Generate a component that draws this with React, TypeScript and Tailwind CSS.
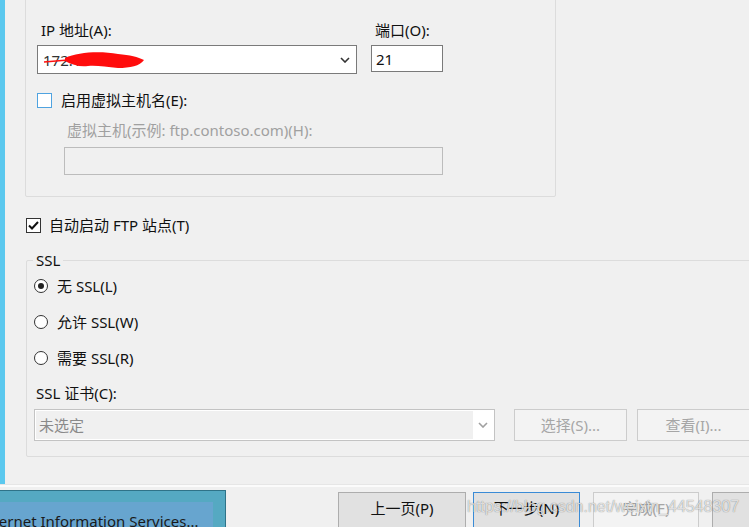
import React from 'react';

const Chevron = ({ color = '#333' }: { color?: string }) => (
  <svg width="10" height="6" viewBox="0 0 10 6" fill="none">
    <polyline points="1,1 5,5 9,1" stroke={color} strokeWidth="1.6" />
  </svg>
);

const Radio = ({ checked = false }: { checked?: boolean }) => (
  <div className="w-[14px] h-[14px] rounded-full border border-[#333] bg-white flex items-center justify-center shrink-0">
    {checked && <div className="w-[6px] h-[6px] rounded-full bg-[#222]" />}
  </div>
);

const Button = ({
  label,
  variant = 'normal',
  className = '',
}: {
  label: string;
  variant?: 'normal' | 'default' | 'disabled';
  className?: string;
}) => {
  const tone =
    variant === 'default'
      ? 'bg-[#e1e1e1] border-[#3a8bd6] text-[#111]'
      : variant === 'disabled'
      ? 'bg-[#f3f3f3] border-[#cccccc] text-[#a6a6a6]'
      : 'bg-[#e1e1e1] border-[#adadad] text-[#111]';
  return (
    <div className={`shrink-0 border flex justify-center ${tone} ${className}`}>
      <span className="leading-[20px]">{label}</span>
    </div>
  );
};

export default function App() {
  return (
    <div className="w-[749px] h-[527px] overflow-hidden bg-[#f0f0f0] relative text-[15px] text-[#111] font-['Noto_Sans','Noto_Sans_CJK_SC',sans-serif]">
      {/* dialog body */}
      <div className="flex h-[484px]">
        <div className="w-[5px] shrink-0 bg-[#5bc8ee]" />
        <div className="flex-1 pl-[20px] flex flex-col">
          {/* binding group */}
          <div className="relative shrink-0 w-[531px] h-[209px] -mt-[12px] border border-[#dcdcdc] rounded-[2px] pl-[11px] pt-[31px]">
            <span className="absolute -top-[13px] left-[8px] px-[3px] bg-[#f0f0f0] leading-[20px]">绑定</span>
            <div className="flex items-start gap-[14px]">
              <div className="flex flex-col">
                <span className="ml-[4px] leading-[20px]">IP 地址(A):</span>
                <div className="relative mt-[5px] w-[320px] h-[29px] bg-white border border-[#7a7a7a] flex items-center pl-[5px] pr-[6px]">
                  <span className="leading-[20px] text-[#333]">172.1</span>
                  <svg className="absolute left-0 top-0" width="140" height="29" viewBox="0 0 140 29">
                    <path d="M6 16 L30 14" stroke="#ff1010" strokeWidth="1.6" fill="none" />
                    <path
                      d="M27 12 C40 6 62 5 80 8 C92 9 100 11 106 14 C102 20 92 22 80 22 C68 21 58 19 50 20 C42 21 34 19 27 15 Z"
                      fill="#ff0c0c"
                    />
                  </svg>
                  <div className="ml-auto">
                    <Chevron />
                  </div>
                </div>
              </div>
              <div className="flex flex-col">
                <span className="ml-[4px] leading-[20px]">端口(O):</span>
                <div className="mt-[5px] w-[72px] h-[27px] bg-white border border-[#7a7a7a] flex items-center pl-[4px]">
                  <span className="leading-[20px]">21</span>
                </div>
              </div>
            </div>
            <div className="mt-[16px] h-[20px] flex items-center gap-[9px]">
              <div className="w-[15px] h-[15px] border border-[#4fa3e0] bg-white shrink-0" />
              <span className="leading-[20px]">启用虚拟主机名(E):</span>
            </div>
            <div className="mt-[10px] ml-[30px] leading-[20px] text-[#a0a0a0]">
              虚拟主机(示例: ftp.contoso.com)(H):
            </div>
            <div className="mt-[7px] ml-[27px] w-[379px] h-[28px] border border-[#bcbcbc] bg-[#f0f0f0]" />
          </div>

          {/* auto start */}
          <div className="mt-[18px] ml-[1px] h-[20px] flex items-center gap-[8px]">
            <div className="w-[15px] h-[15px] border border-[#333] bg-white shrink-0 flex items-center justify-center">
              <svg width="11" height="9" viewBox="0 0 11 9" fill="none">
                <polyline points="1,4.5 4,7.5 10,1" stroke="#111" strokeWidth="2" />
              </svg>
            </div>
            <span className="leading-[20px]">自动启动 FTP 站点(T)</span>
          </div>

          {/* SSL group */}
          <div className="relative shrink-0 mt-[25px] ml-[1px] w-[760px] h-[197px] border border-[#dcdcdc] rounded-[2px] pl-[7px] pt-[15px]">
            <span className="absolute -top-[11px] left-[6px] px-[3px] bg-[#f0f0f0] leading-[20px]">SSL</span>
            <div className="flex flex-col gap-[16px]">
              <div className="h-[20px] flex items-center gap-[9px]">
                <Radio checked />
                <span className="leading-[20px]">无 SSL(L)</span>
              </div>
              <div className="h-[20px] flex items-center gap-[9px]">
                <Radio />
                <span className="leading-[20px]">允许 SSL(W)</span>
              </div>
              <div className="h-[20px] flex items-center gap-[9px]">
                <Radio />
                <span className="leading-[20px]">需要 SSL(R)</span>
              </div>
            </div>
            <div className="mt-[15px] ml-[2px] leading-[20px]">SSL 证书(C):</div>
            <div className="mt-[6px] flex items-start">
              <div className="w-[461px] h-[32px] border border-[#c3c3c3] bg-white p-[1px] flex">
                <div className="w-[437px] h-full bg-[#f0f0f0] flex items-center pl-[3px]">
                  <span className="leading-[20px] text-[#8a8a8a]">未选定</span>
                </div>
                <div className="flex-1 flex items-center justify-center">
                  <Chevron color="#a0a0a0" />
                </div>
              </div>
              <Button label="选择(S)..." variant="disabled" className="ml-[19px] w-[113px] h-[32px] items-center" />
              <Button label="查看(I)..." variant="disabled" className="ml-[10px] w-[113px] h-[32px] items-center" />
            </div>
          </div>
        </div>
      </div>

      {/* separator */}
      <div className="h-px bg-[#e6e6e6]" />
      <div className="h-[2px] bg-[#fbfbfb]" />

      {/* bottom bar */}
      <div className="flex h-[41px]">
        <div className="mt-[3px] w-[226px] shrink-0 bg-[#55a9c2] border-t border-r border-[#2f7388] overflow-hidden">
          <div className="mt-[11px] w-[213px] h-full bg-[#67a5cf] overflow-hidden">
            <div className="pt-[9px] -ml-[21px] whitespace-nowrap leading-[20px] text-[15px] text-[#1a1a1a]">
              Internet Information Services...
            </div>
          </div>
        </div>
        <div className="ml-[112px] mt-[5px] flex items-start">
          <Button label="上一页(P)" className="w-[128px] h-[40px] pt-[5px]" />
          <Button label="下一步(N)" variant="default" className="ml-[7px] w-[107px] h-[40px] pt-[5px]" />
          <Button label="完成(F)" variant="disabled" className="ml-[13px] w-[106px] h-[40px] pt-[5px]" />
          <Button label="" className="ml-[13px] w-[60px] h-[40px] pt-[5px]" />
        </div>
      </div>

      {/* watermark */}
      <div className="absolute left-[467px] top-[497px] whitespace-nowrap leading-[20px] text-[16px] font-['Liberation_Sans',sans-serif] text-white/75 [text-shadow:0_0_1px_rgba(0,0,0,0.55)] pointer-events-none">
        https://blog.csdn.net/weixin_44548307
      </div>
    </div>
  );
}
